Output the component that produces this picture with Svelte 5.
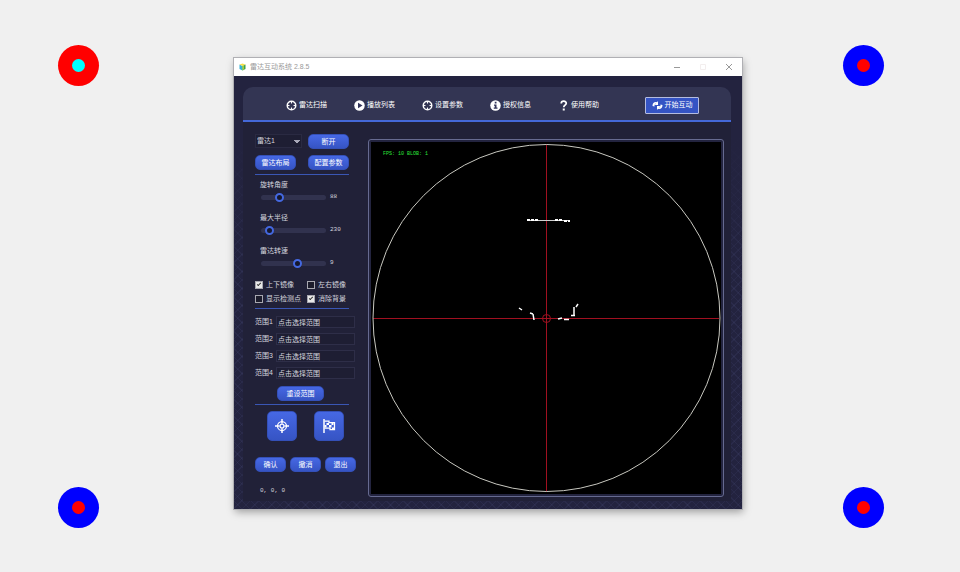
<script>
  const markers = [
    { id: 'tl', active: true },
    { id: 'tr', active: false },
    { id: 'bl', active: false },
    { id: 'br', active: false }
  ];

  const menu = [
    { icon: 'target', label: '雷达扫描' },
    { icon: 'play', label: '播放列表' },
    { icon: 'target', label: '设置参数' },
    { icon: 'info', label: '授权信息' },
    { icon: 'help', label: '使用帮助' }
  ];

  let sliders = $state([
    { id: 'angle', label: '旋转角度', value: 88, min: 0, max: 360 },
    { id: 'radius', label: '最大半径', value: 230, min: 0, max: 3000 },
    { id: 'speed', label: '雷达转速', value: 9, min: 0, max: 16 }
  ]);

  let checks = $state([
    { label: '上下镜像', on: true },
    { label: '左右镜像', on: false },
    { label: '显示检测点', on: false },
    { label: '消除背景', on: true }
  ]);

  let ranges = $state(['点击选择范围', '点击选择范围', '点击选择范围', '点击选择范围']);
</script>

{#snippet icon(name)}
  <svg class="icon" viewBox="0 0 22 22" aria-hidden="true">
    {#if name === 'target'}
      <circle cx="11" cy="11" r="8.5" fill="none" stroke="#fff" stroke-width="3" />
      <path d="M11 2v5M11 15v5M2 11h5M15 11h5" stroke="#fff" stroke-width="2" />
    {:else if name === 'play'}
      <circle cx="11" cy="11" r="10.5" fill="#fff" />
      <path d="M8 5.5l9 5.5l-9 5.5z" fill="#32345a" />
    {:else if name === 'info'}
      <circle cx="11" cy="11" r="10.5" fill="#fff" />
      <path d="M9.5 3.5h3.5v3.5h-3.5zM8 9h5v6h2v2.500H7.500V15h2v-3.500H8z" fill="#32345a" />
    {:else if name === 'help'}
      <path d="M6.500 7c0-6 10-6 10-.5c0 4-5 3.500-5 8" fill="none" stroke="#fff" stroke-width="3.5" />
      <rect x="9.500" y="17" width="4" height="4" fill="#fff" />
    {:else if name === 'sync'}
      <path d="M1 12c0-6 4-9 9-7.500l2-2.500v8H5l3-3c-3 0-3 3-3 6z" fill="#fff" />
      <path d="M21 10c0 6-4 9-9 7.500l-2 2.500v-8h7l-3 3c3 0 3-3 3-6z" fill="#fff" />
    {/if}
  </svg>
{/snippet}

<main class="desktop">
  {#each markers as m (m.id)}
    <span class="marker {m.id}" class:active={m.active}></span>
  {/each}

  <section class="window">
    <header class="titlebar">
      <svg class="logo" viewBox="0 0 14 16" aria-hidden="true">
        <path d="M1 3l6 3v9l-6-3z" fill="#35b0d8" />
        <path d="M7 6l6-3v9l-6 3z" fill="#3f9e4d" />
        <path d="M1 3l6-2l6 2l-6 3z" fill="#f5e04a" />
        <path d="M7 6l3-1v8l-3 2z" fill="#a5cf38" />
      </svg>
      <h1>雷达互动系统 2.8.5</h1>
      <div class="controls">
        <button aria-label="最小化"><svg viewBox="0 0 8 8"><path d="M1 4.5h6" stroke="#999" /></svg></button>
        <button aria-label="最大化" disabled><svg viewBox="0 0 8 8"><path d="M1.500 1.500h5v5h-5z" fill="none" stroke="#f3eeee" /></svg></button>
        <button aria-label="关闭"><svg viewBox="0 0 8 8"><path d="M1 1l6 6M7 1l-6 6" stroke="#999" /></svg></button>
      </div>
    </header>

    <div class="body">
      <nav>
        {#each menu as item}
          <a href="#top">{@render icon(item.icon)}{item.label}</a>
        {/each}
        <button class="start">{@render icon('sync')}开始互动</button>
      </nav>

      <div class="panel">
        <aside>
          <div class="pair">
            <select aria-label="雷达"><option>雷达1</option></select>
            <button class="btn">断开</button>
            <button class="btn">雷达布局</button>
            <button class="btn">配置参数</button>
          </div>
          <hr />

          <div class="sliders">
            {#each sliders as s (s.id)}
              <div class="slider">
                <label for={s.id}>{s.label}</label>
                <div class="track">
                  <input id={s.id} type="range" min={s.min} max={s.max} bind:value={s.value} />
                  <output for={s.id}>{s.value}</output>
                </div>
              </div>
            {/each}
          </div>

          <div class="checks">
            {#each checks as c}
              <label><input type="checkbox" bind:checked={c.on} />{c.label}</label>
            {/each}
          </div>
          <hr />

          <div class="ranges">
            {#each ranges as _, i}
              <label>范围{i + 1}<input type="text" bind:value={ranges[i]} /></label>
            {/each}
          </div>
          <button class="btn reset">重设范围</button>
          <hr />

          <div class="tools">
            <button class="btn tool" aria-label="定位">
              <svg viewBox="0 0 28 28">
                <circle cx="14" cy="14" r="9" fill="none" stroke="#fff" stroke-width="2.5" />
                <circle cx="14" cy="14" r="4" fill="none" stroke="#fff" stroke-width="2.5" />
                <path d="M14 0v9M14 19v9M0 14h9M19 14h9" stroke="#fff" stroke-width="3" />
              </svg>
            </button>
            <button class="btn tool" aria-label="标记">
              <svg viewBox="0 0 28 28">
                <path d="M4 0v28" stroke="#fff" stroke-width="3" />
                <path d="M5 4h9v3h11v14h-9v-3H5" fill="none" stroke="#fff" stroke-width="2.5" />
                <path d="M9 8h5v4h-5zM14 12h5v5h-5zM19 7h4v5h-4zM5 12h4v5h-4zM20 17h4v4h-4z" fill="#fff" />
              </svg>
            </button>
          </div>

          <div class="actions">
            <button class="btn">确认</button>
            <button class="btn">撤消</button>
            <button class="btn">退出</button>
          </div>
          <p class="coords">0, 0, 0</p>
        </aside>

        <div class="radar">
          <svg viewBox="0 0 350 352" role="img" aria-label="雷达扫描">
            <rect width="350" height="352" fill="#000" />
            <path d="M175.500 2v348M2 176.500h346" stroke="#a01020" />
            <circle cx="175.500" cy="176" r="173.500" fill="none" stroke="#c8c8c0" />
            <circle cx="175.500" cy="176.500" r="4" fill="none" stroke="#a01020" />
            <path d="M156 78.500h43" stroke="#d0d0d0" />
            <path d="M156 78h12M184 78h8M193 79h6" stroke="#fff" stroke-width="2" stroke-dasharray="3 1" />
            <path d="M148 166l3 2M159 171l3 1M162 172l1 6M187 177l4-1M193 177.500h5M200 173.500h4M203 173v-8M205 165l2-3" fill="none" stroke="#fff" stroke-width="1.500" />
            <text x="12" y="13">FPS: 10 BLOB: 1</text>
          </svg>
        </div>
      </div>
    </div>
  </section>
</main>

<style>
  :global(body) {
    margin: 0;
    background: #f0f0f0;
  }

  .desktop {
    position: relative;
    min-height: 100vh;
    font-family: "Liberation Sans", "Noto Sans CJK SC", sans-serif;
    font-size: 7px;
    line-height: 10px;
    color: #d4d4de;
  }

  button, input, select {
    font: inherit;
    color: inherit;
    margin: 0;
    padding: 0;
    box-sizing: border-box;
  }

  .marker {
    position: absolute;
    display: grid;
    place-items: center;
    width: 41px;
    height: 41px;
    border-radius: 50%;
    background: #00f;
  }
  .marker::after {
    content: "";
    width: 13px;
    height: 13px;
    border-radius: 50%;
    background: #f00;
  }
  .marker.active {
    background: #f00;
  }
  .marker.active::after {
    background: #0ff;
  }
  .tl { left: 58px; top: 45px; }
  .tr { right: 76px; top: 45px; }
  .bl { left: 58px; bottom: 44px; }
  .br { right: 76px; bottom: 44px; }

  .window {
    position: absolute;
    top: 58px;
    left: 234px;
    right: 218px;
    box-shadow: 0 0 0 1px #b0b0b4, 1px 3px 8px rgba(0, 0, 0, 0.35);
  }

  .titlebar {
    display: flex;
    align-items: center;
    gap: 4px;
    height: 18px;
    padding: 0 9px 0 5px;
    background: #fff;
    color: #999;
  }
  .logo {
    width: 7px;
    height: 8px;
  }
  h1 {
    margin: 0;
    font-size: 7px;
    font-weight: normal;
  }
  .controls {
    display: flex;
    gap: 18px;
    margin-left: auto;
  }
  .controls button {
    width: 8px;
    height: 8px;
    border: 0;
    background: none;
  }
  .controls svg {
    display: block;
    width: 8px;
    height: 8px;
  }

  .body {
    padding: 11px 11px 8px 9px;
    background:
      linear-gradient(#23233f 60px, transparent 200px),
      repeating-linear-gradient(45deg, transparent 0 5px, rgba(90, 95, 150, 0.12) 5px 6px),
      repeating-linear-gradient(-45deg, transparent 0 5px, rgba(90, 95, 150, 0.12) 5px 6px),
      #23233f;
  }

  nav {
    display: flex;
    align-items: center;
    gap: 27px;
    height: 35px;
    box-sizing: border-box;
    padding: 3px 32px 0 43px;
    border-bottom: 2px solid #4468d8;
    border-radius: 10px 10px 0 0;
    background: #333553;
    color: #fff;
  }
  nav a {
    display: flex;
    align-items: center;
    gap: 2px;
    color: inherit;
    text-decoration: none;
    white-space: nowrap;
  }
  .icon {
    width: 11px;
    height: 11px;
    flex: none;
  }
  .start {
    display: flex;
    align-items: center;
    justify-content: center;
    gap: 2px;
    width: 54px;
    height: 17px;
    margin-left: auto;
    border: 1px solid #b4bce0;
    border-radius: 1px;
    background: #3554c4;
    white-space: nowrap;
  }

  .panel {
    display: grid;
    grid-template-columns: 125px 1fr;
    align-items: start;
    padding: 0 7px 4px 0;
    background: #212138;
  }

  aside {
    padding: 12px 11px 0 12px;
  }

  .pair {
    display: grid;
    grid-template-columns: 41px 41px;
    gap: 6px 12px;
  }
  select {
    width: 47px;
    height: 14px;
    padding: 0 1px;
    border: 1px solid #2a2a42;
    appearance: none;
    background: conic-gradient(from -45deg at 50% 100%, #a8a8b8 90deg, transparent 0) 38px 5px / 6px 3px no-repeat #1e1e33;
  }

  .btn {
    height: 15px;
    border: 1px solid #3450b8;
    border-radius: 5px;
    background: linear-gradient(#4668e4, #3654c4);
    color: #fff;
    white-space: nowrap;
  }

  hr {
    width: 94px;
    height: 1px;
    margin: 4px 0 5px;
    border: 0;
    background: #3a56b4;
  }

  .sliders {
    display: flex;
    flex-direction: column;
    gap: 9px;
    padding: 0 0 0 5px;
  }
  .slider label {
    display: block;
  }
  .track {
    display: flex;
    align-items: center;
    gap: 4px;
    height: 14px;
    padding: 0 0 0 1px;
  }
  output, .coords {
    font-family: "Liberation Mono", monospace;
    font-size: 6px;
  }
  input[type="range"] {
    width: 65px;
    height: 9px;
    appearance: none;
    background: none;
  }
  input[type="range"]::-webkit-slider-runnable-track {
    height: 5px;
    border-radius: 3px;
    background: #31324e;
  }
  input[type="range"]::-webkit-slider-thumb {
    appearance: none;
    box-sizing: border-box;
    width: 9px;
    height: 9px;
    margin-top: -2px;
    border: 2px solid #4468e0;
    border-radius: 50%;
    background: #16182e;
  }

  .checks {
    display: grid;
    grid-template-columns: 52px 50px;
    gap: 4px 0;
    margin-top: 10px;
  }
  .checks label {
    display: flex;
    align-items: center;
    gap: 3px;
    white-space: nowrap;
  }
  input[type="checkbox"] {
    width: 8px;
    height: 8px;
    border: 1px solid #a8a8b0;
    appearance: none;
    background: #1c1c2c;
  }
  input[type="checkbox"]:checked {
    background: #e8e8e8;
  }
  input[type="checkbox"]:checked::before {
    content: "";
    display: block;
    width: 4px;
    height: 2px;
    margin: 1px;
    border: solid #333;
    border-width: 0 0 1px 1px;
    box-sizing: border-box;
    transform: rotate(-45deg);
  }

  .ranges {
    display: flex;
    flex-direction: column;
    gap: 5px;
    margin-top: 7px;
  }
  .ranges label {
    display: flex;
    align-items: center;
    justify-content: space-between;
    width: 100px;
    white-space: nowrap;
  }
  .ranges input {
    width: 79px;
    height: 12px;
    padding: 0 1px;
    border: 1px solid #2e2e48;
    background: #1e1e33;
  }

  .reset {
    display: block;
    width: 47px;
    margin: 7px 0 0 22px;
  }
  .reset + hr {
    margin-top: 3px;
  }

  .tools {
    display: flex;
    gap: 17px;
    padding: 1px 0 0 12px;
  }
  .tool {
    display: grid;
    place-items: center;
    width: 30px;
    height: 30px;
  }
  .tool svg {
    width: 14px;
    height: 14px;
  }

  .actions {
    display: flex;
    gap: 4px;
    margin-top: 16px;
  }
  .actions .btn {
    width: 31px;
    flex: none;
  }
  .coords {
    margin: 14px 0 0 5px;
  }

  .radar {
    margin-top: 17px;
    padding: 2px;
    border: 1px solid #666a90;
    border-radius: 3px;
    background: #23243f;
  }
  .radar svg {
    display: block;
    width: 100%;
  }
  .radar text {
    font-family: "Liberation Mono", monospace;
    font-size: 5px;
    fill: #2be03a;
  }
</style>
